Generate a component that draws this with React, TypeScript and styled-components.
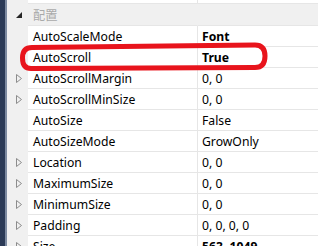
import styled, { createGlobalStyle } from 'styled-components';

const GlobalStyle = createGlobalStyle`
  html, body {
    margin: 0;
    padding: 0;
    background: #ffffff;
    overflow: hidden;
  }
`;

type Prop = {
  name: string;
  value: string;
  expandable?: boolean;
  changed?: boolean;
};

const PROPS: Prop[] = [
  { name: 'AutoScaleMode', value: 'Font', changed: true },
  { name: 'AutoScroll', value: 'True', changed: true },
  { name: 'AutoScrollMargin', value: '0, 0', expandable: true },
  { name: 'AutoScrollMinSize', value: '0, 0', expandable: true },
  { name: 'AutoSize', value: 'False' },
  { name: 'AutoSizeMode', value: 'GrowOnly' },
  { name: 'Location', value: '0, 0', expandable: true },
  { name: 'MaximumSize', value: '0, 0', expandable: true },
  { name: 'MinimumSize', value: '0, 0', expandable: true },
  { name: 'Padding', value: '0, 0, 0, 0', expandable: true },
  { name: 'Size', value: '563, 1049', expandable: true, changed: true },
];

const Window = styled.div`
  position: relative;
  display: flex;
  width: 318px;
  height: 246px;
  overflow: hidden;
  font-family: 'Noto Sans', 'Noto Sans CJK JP', sans-serif;
  font-size: 12.2px;
  color: #000000;
`;

const Frame = styled.div`
  width: 5px;
  flex: none;
  background: #2b3a56;
  border-right: 2px solid #7d8aa0;
`;

const Grid = styled.div`
  flex: 1;
  display: flex;
  flex-direction: column;
`;

const Row = styled.div<{ $height: number; $category?: boolean }>`
  display: grid;
  grid-template-columns: 21px 170px 1fr;
  height: ${p => p.$height}px;
  flex: none;
  background: ${p => (p.$category ? '#f0f0f0' : '#ffffff')};
`;

const Gutter = styled.div`
  display: flex;
  align-items: center;
  justify-content: center;
  padding-left: 3px;
  background: #f0f0f0;
`;

const NameCell = styled.div<{ $category?: boolean }>`
  display: flex;
  align-items: center;
  padding-left: 5px;
  white-space: nowrap;
  border-bottom: 1px solid #e6e6e6;
  border-right: 1px solid ${p => (p.$category ? 'transparent' : '#e6e6e6')};
  color: ${p => (p.$category ? '#a9a9a9' : '#000000')};
`;

const ValueCell = styled.div<{ $bold?: boolean }>`
  display: flex;
  align-items: center;
  padding-left: 4px;
  white-space: nowrap;
  border-bottom: 1px solid #e6e6e6;
  font-weight: ${p => (p.$bold ? 700 : 400)};
`;

const Highlight = styled.svg`
  position: absolute;
  left: 0;
  top: 0;
  pointer-events: none;
`;

function Expander() {
  return (
    <svg width="6" height="9" viewBox="0 0 6 9">
      <path d="M0.5 0.5 L5.5 4.5 L0.5 8.5 Z" fill="none" stroke="#8c8c8c" strokeWidth="1" />
    </svg>
  );
}

function Collapser() {
  return (
    <svg width="6" height="6" viewBox="0 0 6 6">
      <path d="M6 0 L6 6 L0 6 Z" fill="#262626" />
    </svg>
  );
}

export default function App() {
  return (
    <Window>
      <GlobalStyle />
      <Frame />
      <Grid>
        <Row $height={4}>
          <Gutter />
          <NameCell />
          <ValueCell />
        </Row>
        <Row $height={22} $category>
          <Gutter>
            <Collapser />
          </Gutter>
          <NameCell $category>配置</NameCell>
          <ValueCell />
        </Row>
        {PROPS.map(p => (
          <Row key={p.name} $height={21}>
            <Gutter>{p.expandable && <Expander />}</Gutter>
            <NameCell>{p.name}</NameCell>
            <ValueCell $bold={p.changed}>{p.value}</ValueCell>
          </Row>
        ))}
      </Grid>
      <Highlight width="318" height="246" viewBox="0 0 318 246">
        <path
          d="M32 47.5 L255 45 Q265 45 265 56 Q265 67.5 255 67.5 L31 68.5 Q22.5 68.5 22.5 58 Q22.5 47.5 32 47.5 Z"
          fill="none"
          stroke="#e8141c"
          strokeWidth="5"
        />
      </Highlight>
    </Window>
  );
}
